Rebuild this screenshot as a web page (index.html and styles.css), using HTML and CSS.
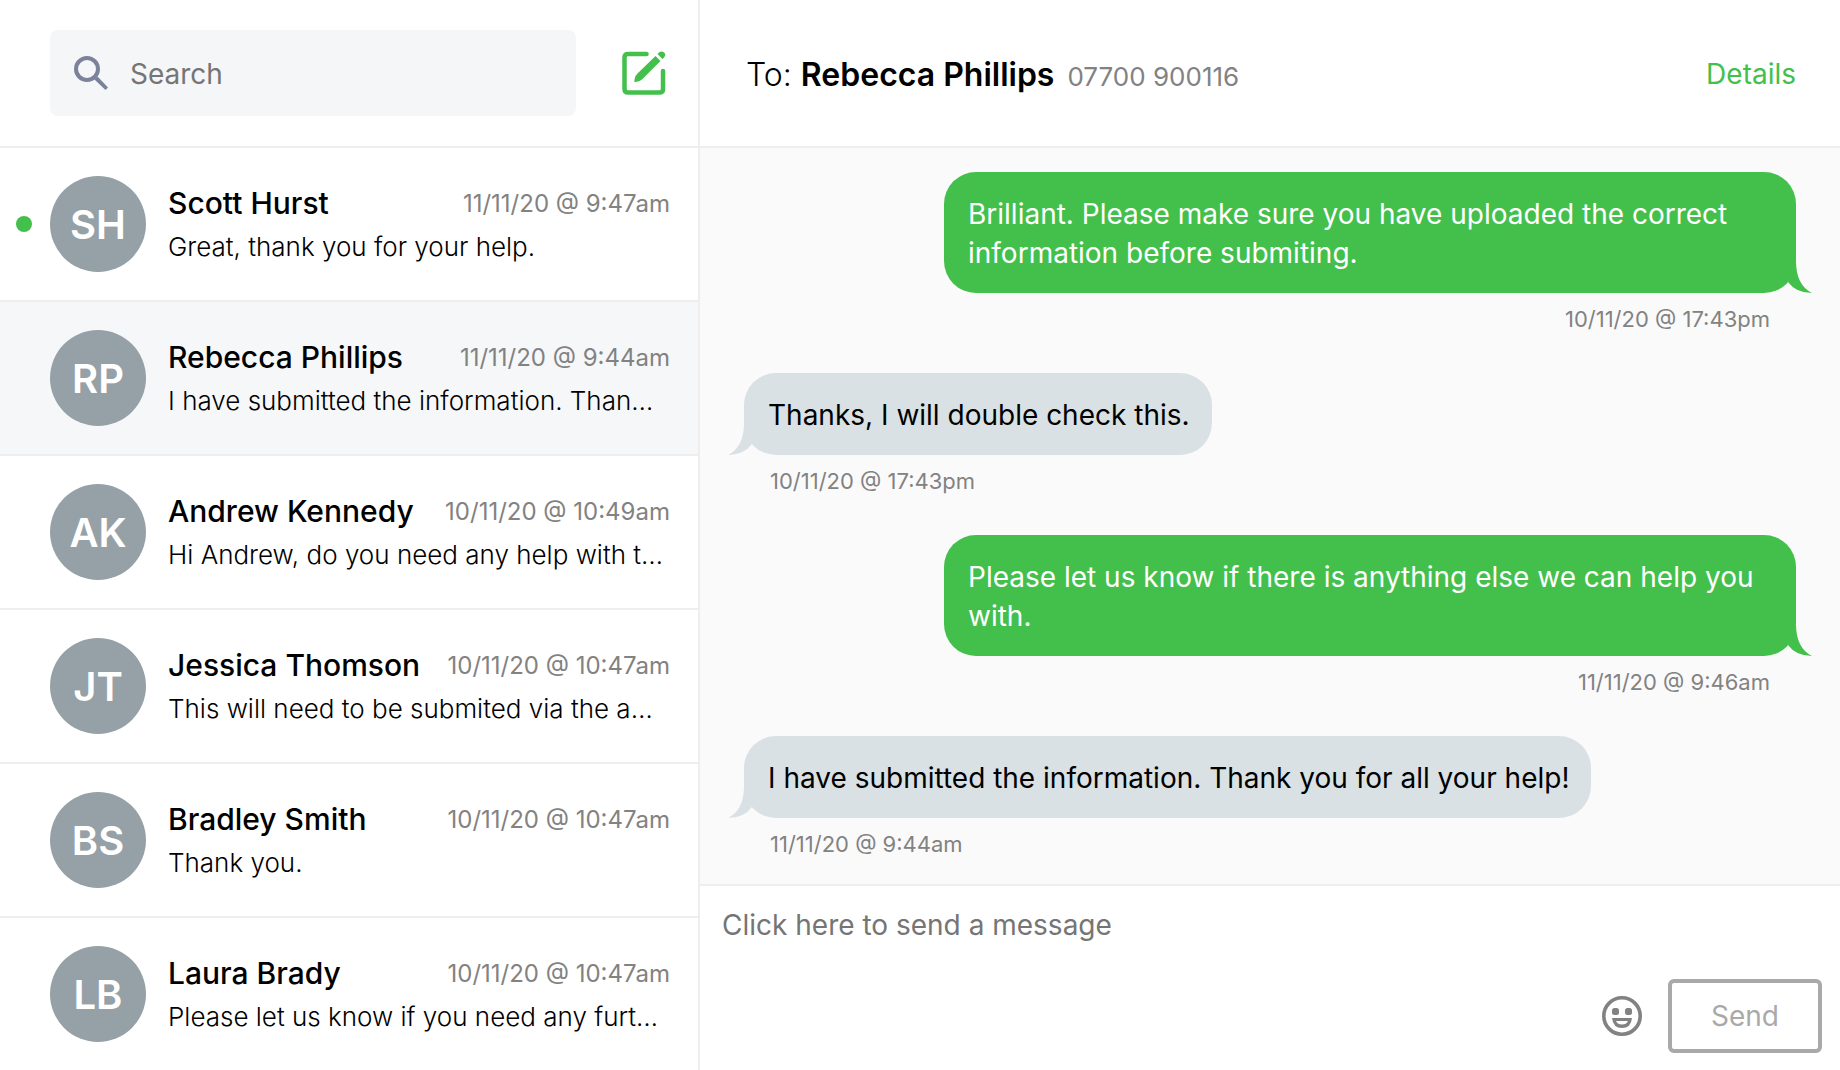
FILE: index.html
```html
<!DOCTYPE html>
<html lang="en">
<head>
    <meta charset="UTF-8">
    <meta name="viewport" content="width=device-width, initial-scale=1.0">
    <title>Messages</title>
    <link rel="stylesheet" href="styles.css">
</head>
<body>
    <div class="app">
        <aside class="sidebar">
            <div class="sidebar-header">
                <label class="search">
                    <svg class="search-icon" viewBox="0 0 34 34" aria-hidden="true">
                        <circle cx="13" cy="13" r="11" fill="none" stroke="currentColor" stroke-width="4"/>
                        <path d="M21.500 23.500 23.500 21.500 33 31.500 31.500 33Z" fill="currentColor" stroke="currentColor" stroke-width="1.500" stroke-linejoin="round"/>
                    </svg>
                    <input type="text" class="search-input" placeholder="Search" aria-label="Search">
                </label>
                <button class="compose" aria-label="New message">
                    <svg viewBox="0 0 44 44" aria-hidden="true">
                        <path d="M24.500 3H6Q2.500 3 2.500 6.500V38Q2.500 41.500 6 41.500H37.500Q41 41.500 41 38V20" fill="none" stroke="currentColor" stroke-width="4.500" stroke-linecap="round"/>
                        <path d="M33.500 5 38.500 10 20.500 28Q17.500 31 12.500 31Q12 30.500 13 26.500Q13.500 24.500 15.500 22.500Z" fill="currentColor"/>
                        <path d="M35.500 3 37 1.500Q39.500-.5 42 1.500T42 6.500L40.500 8Z" fill="currentColor"/>
                    </svg>
                </button>
            </div>
            <ul class="conversations">
                <li class="conversation unread">
                    <span class="avatar">SH</span>
                    <div class="summary">
                        <div class="summary-top"><span class="name">Scott Hurst</span><span class="time">11/11/20 @ 9:47am</span></div>
                        <p class="preview">Great, thank you for your help.</p>
                    </div>
                </li>
                <li class="conversation active">
                    <span class="avatar">RP</span>
                    <div class="summary">
                        <div class="summary-top"><span class="name">Rebecca Phillips</span><span class="time">11/11/20 @ 9:44am</span></div>
                        <p class="preview">I have submitted the information. Thank you for all your help!</p>
                    </div>
                </li>
                <li class="conversation">
                    <span class="avatar">AK</span>
                    <div class="summary">
                        <div class="summary-top"><span class="name">Andrew Kennedy</span><span class="time">10/11/20 @ 10:49am</span></div>
                        <p class="preview">Hi Andrew, do you need any help with this?</p>
                    </div>
                </li>
                <li class="conversation">
                    <span class="avatar">JT</span>
                    <div class="summary">
                        <div class="summary-top"><span class="name">Jessica Thomson</span><span class="time">10/11/20 @ 10:47am</span></div>
                        <p class="preview">This will need to be submited via the app.</p>
                    </div>
                </li>
                <li class="conversation">
                    <span class="avatar">BS</span>
                    <div class="summary">
                        <div class="summary-top"><span class="name">Bradley Smith</span><span class="time">10/11/20 @ 10:47am</span></div>
                        <p class="preview">Thank you.</p>
                    </div>
                </li>
                <li class="conversation">
                    <span class="avatar">LB</span>
                    <div class="summary">
                        <div class="summary-top"><span class="name">Laura Brady</span><span class="time">10/11/20 @ 10:47am</span></div>
                        <p class="preview">Please let us know if you need any further help.</p>
                    </div>
                </li>
            </ul>
        </aside>

        <main class="chat">
            <header class="chat-header">
                <h1 class="recipient">To: <strong>Rebecca Phillips</strong> <span class="phone">07700 900116</span></h1>
                <a href="#" class="details">Details</a>
            </header>
            <div class="messages">
                <div class="message sent">
                    <p class="bubble">Brilliant. Please make sure you have uploaded the correct information before submiting.</p>
                    <span class="stamp">10/11/20 @ 17:43pm</span>
                </div>
                <div class="message received">
                    <p class="bubble">Thanks, I will double check this.</p>
                    <span class="stamp">10/11/20 @ 17:43pm</span>
                </div>
                <div class="message sent">
                    <p class="bubble">Please let us know if there is anything else we can help you with.</p>
                    <span class="stamp">11/11/20 @ 9:46am</span>
                </div>
                <div class="message received">
                    <p class="bubble">I have submitted the information. Thank you for all your help!</p>
                    <span class="stamp">11/11/20 @ 9:44am</span>
                </div>
            </div>
            <form class="composer">
                <textarea class="composer-input" placeholder="Click here to send a message" aria-label="Message"></textarea>
                <div class="composer-actions">
                    <button type="button" class="emoji" aria-label="Insert emoji">
                        <svg viewBox="0 0 40 40" aria-hidden="true">
                            <circle cx="20" cy="20" r="18.200" fill="none" stroke="currentColor" stroke-width="3.600"/>
                            <rect x="10" y="12" width="7" height="7" rx="2.500" fill="currentColor"/>
                            <rect x="23" y="12" width="7" height="7" rx="2.500" fill="currentColor"/>
                            <path d="M10 22H30Q29 32 20 32T10 22ZM14 25Q15.500 28.500 20 28.500T26 25Z" fill="currentColor" fill-rule="evenodd"/>
                        </svg>
                    </button>
                    <button type="submit" class="send" disabled>Send</button>
                </div>
            </form>
        </main>
    </div>
</body>
</html>
```
FILE: styles.css
```css
* { box-sizing: border-box; }
body { margin: 0; font-family: Inter, "Liberation Sans", sans-serif; font-size: 28px; font-optical-sizing: none; color: #000; background: #fff; }
p, h1, ul { margin: 0; padding: 0; }
button { padding: 0; border: 0; background: none; cursor: pointer; }
input, textarea, button { font: inherit; }
svg { display: block; }

.app { display: grid; grid-template-columns: minmax(0, 700px) 1fr; height: 100vh; overflow: hidden; }

/* conversation list */
.sidebar { border-right: 2px solid #eee; min-width: 0; overflow: hidden; }
.sidebar-header { display: flex; align-items: center; gap: 46px; height: 148px; padding: 0 32px 0 50px; border-bottom: 2px solid #eee; }
.search { display: flex; align-items: center; flex: 1; min-width: 0; gap: 22px; height: 86px; padding: 0 24px; border-radius: 8px; background: #f5f6f8; }
.search-icon { flex: none; width: 34px; height: 34px; color: #7b829a; }
.search-input { flex: 1; min-width: 0; padding: 2px 0 0; border: 0; outline: 0; background: none; }
::placeholder { color: #757575; opacity: 1; }
.compose { color: #43c04b; }
.compose svg { width: 44px; height: 44px; }

.conversations { list-style: none; }
.conversation { position: relative; display: flex; align-items: center; gap: 22px; height: 154px; padding: 0 28px 0 50px; border-bottom: 2px solid #eee; }
.conversation.active { background: #f6f7f9; }
.conversation.unread::before { content: ""; position: absolute; left: 16px; width: 16px; height: 16px; border-radius: 50%; background: #43c04b; }
.avatar { display: flex; align-items: center; justify-content: center; flex: none; width: 96px; height: 96px; border-radius: 50%; background: #95a1a7; color: #fff; font-size: 40px; font-weight: 600; }
.summary { flex: 1; min-width: 0; padding-top: 2px; }
.summary-top { display: flex; align-items: center; justify-content: space-between; height: 44px; }
.name { font-size: 30px; font-weight: 500; }
.time { font-size: 24px; font-weight: 400; color: #828282; }
.preview { height: 44px; padding-right: 4px; line-height: 44px; font-size: 26px; font-weight: 300; overflow: hidden; white-space: nowrap; text-overflow: ellipsis; }

/* open conversation */
.chat { display: flex; flex-direction: column; min-width: 0; min-height: 0; }
.chat-header { display: flex; align-items: center; justify-content: space-between; height: 148px; padding: 2px 44px 0 46px; border-bottom: 2px solid #eee; }
.recipient { font-size: 32px; font-weight: 300; }
.recipient strong { font-weight: 600; }
.phone { margin-left: 4px; font-size: 26px; font-weight: 400; color: #828282; }
.details { color: #43c04b; text-decoration: none; }

.messages { display: flex; flex-direction: column; flex: 1; gap: 26px; min-height: 0; padding: 24px 44px 0; background: #fafafa; overflow: hidden; }
.message { display: flex; flex-direction: column; align-items: flex-start; }
.bubble { position: relative; max-width: 852px; padding: 23px 22px 20px 24px; border-radius: 32px; line-height: 39px; }
.bubble::after { content: ""; position: absolute; bottom: 0; width: 32px; height: 32px; clip-path: path("M16 0Q16 24 32 32Q16 32 8 21Z"); }
.stamp { height: 54px; padding: 0 26px; line-height: 53px; font-size: 22px; font-weight: 400; color: #828282; }
.sent { align-items: flex-end; }
.sent .bubble, .sent .bubble::after { background: #43c04b; }
.sent .bubble { color: #fff; }
.sent .bubble::after { right: -16px; }
.received .bubble, .received .bubble::after { background: #dae1e4; }
.received .bubble::after { left: -16px; transform: scaleX(-1); }

.composer { display: flex; flex-direction: column; height: 186px; padding: 18px 18px 17px; border-top: 2px solid #eee; }
.composer-input { flex: 1; min-height: 0; padding: 2px 4px; border: 0; outline: 0; resize: none; background: none; line-height: 38px; }
.composer-actions { display: flex; align-items: center; justify-content: flex-end; gap: 26px; }
.emoji { color: #828282; }
.emoji svg { width: 40px; height: 40px; }
.send { width: 154px; height: 74px; border: 4px solid #a9a9a9; border-radius: 6px; color: #a9a9a9; }
```
